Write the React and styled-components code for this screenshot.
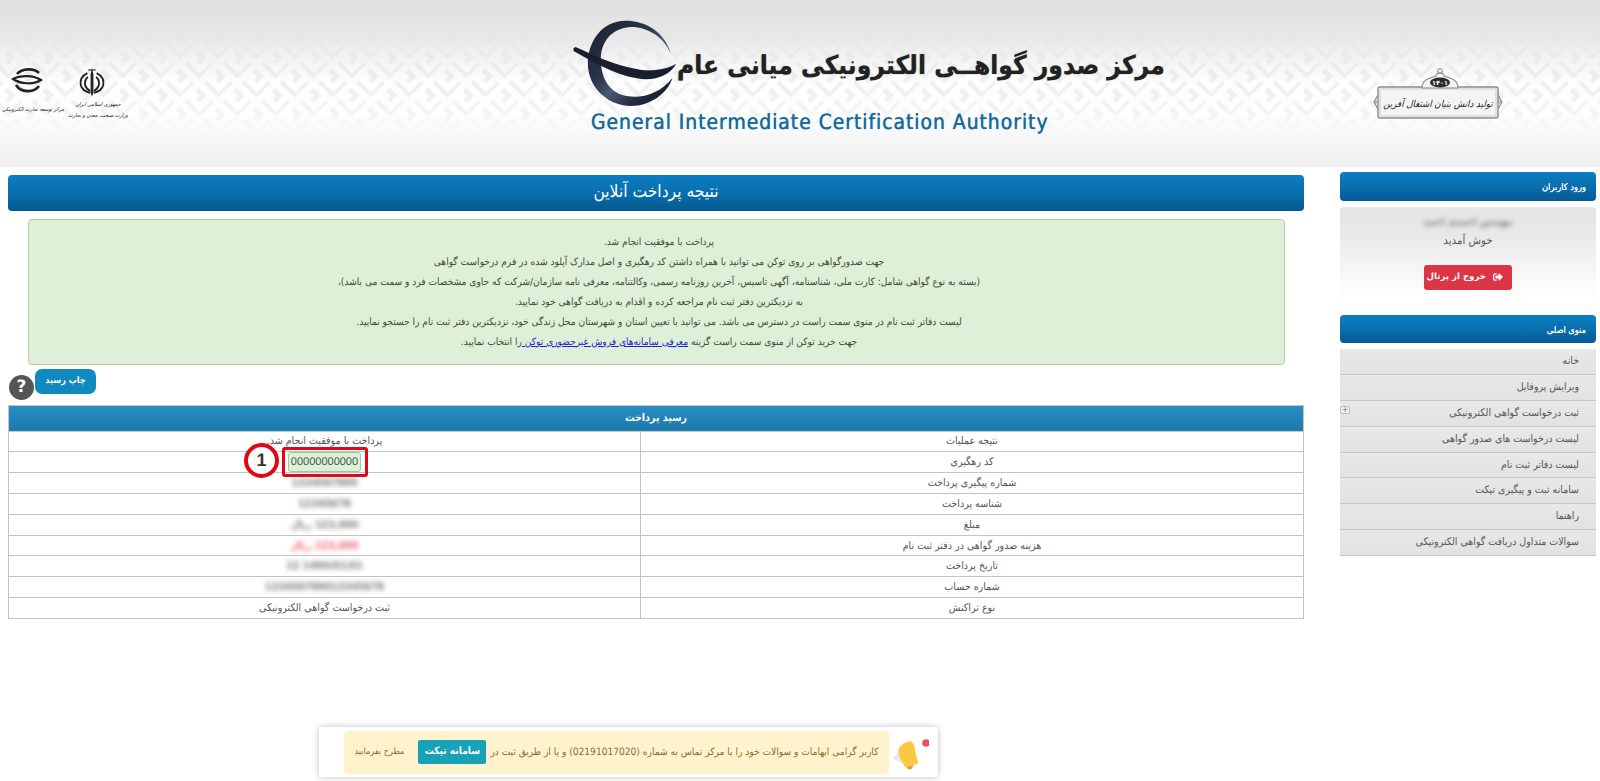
import React from 'react';
import styled, { createGlobalStyle } from 'styled-components';
import { FaSignOutAlt } from 'react-icons/fa';

const FONT = '"DejaVu Sans Condensed", "DejaVu Sans", sans-serif';

const Global = createGlobalStyle`
  html, body { margin: 0; padding: 0; background: #fff; }
  body { font-family: ${FONT}; overflow: hidden; text-rendering: geometricPrecision; }
  * { box-sizing: border-box; }
`;

const Page = styled.div`height: 781px; overflow: hidden;`;

const Banner = styled.header`
  position: relative; height: 167px; display: flex; overflow: hidden; direction: ltr;
  background: linear-gradient(to bottom, #dfdfdf 0, #e9e9e9 45px, #f1f1f1 100px, #f8f8f8 130px, #f2f2f2 160px, #eeeeee 167px);
`;
const PatternLayer = styled.svg`
  position: absolute; inset: 0; width: 100%; height: 100%;
`;
const Ministries = styled.div`
  position: relative; width: 130px; flex: none; padding-top: 68px; display: grid; grid-template-columns: 66px 64px;
`;
const MinistryCol = styled.div`display: flex; flex-direction: column; align-items: center;`;
const TinyText = styled.div`
  direction: rtl; font-size: 5.4px; line-height: 10px; color: #222; white-space: nowrap; font-style: italic;
  margin-top: ${p => p.$top || 0}px;
`;
const LogoSlot = styled.div`margin-right: ${p => p.$shift}px;`;
const Brand = styled.div`
  position: relative; margin-left: 440px; width: 620px; height: 167px; flex: none; display: flex; flex-direction: column;
`;
const BrandTop = styled.div`display: flex; align-items: flex-start; height: 108px; padding-top: 18px;`;
const Title = styled.h1`
  margin: 28px 0 0 0; direction: rtl; font: bold 26.1px/40px ${FONT}; color: #222; white-space: nowrap;
  text-shadow: 0 0 1px #666;
`;
const English = styled.div`
  margin: 0 0 0 21px; font: 21px/28px ${FONT}; color: #17699c; letter-spacing: 0.92px; white-space: nowrap;
  text-shadow: 0 0 .7px #17699c;
`;
const Seal = styled.div`position: relative; margin: 67px 80px 0 auto; flex: none;`;

const Body = styled.div`
  direction: rtl; display: flex; align-items: flex-start; gap: 36px; padding: 5px 4px 0 8px;
`;
const Side = styled.aside`width: 256px; flex: none;`;
const SideHead = styled.div`
  height: 28.5px; border-radius: 4px; padding: 5px 10px 0; color: #fff; font: 9.2px/22px ${FONT};
  text-shadow: 0 0 .6px #fff;
  background: linear-gradient(to bottom, #0b7ec2 0, #0a6dab 55%, #055a96 100%);
`;
const UserBox = styled.div`
  height: 108px; margin-top: 6px; border-radius: 4px; text-align: center; padding-top: 8px;
  background: linear-gradient(to bottom, #e6e6e6 0, #e8e8e8 25%, #f5f5f5 55%, #fff 85%, #fbfbfb 100%);
  font-size: 11.4px; color: #555;
`;
const Blurred = styled.div`
  filter: blur(${p => p.$b || 2}px); color: ${p => p.$c || '#777'}; line-height: ${p => p.$lh || 16}px; font-size: ${p => p.$fs || 11}px; font-weight: bold;
`;
const Welcome = styled.div`line-height: 16px; margin-top: 1px;`;
const Logout = styled.div`
  width: 88px; height: 25px; margin: 17px auto 0; padding-right: 9px; background: #dc3545; color: #fff; border-radius: 3px;
  display: flex; align-items: center; justify-content: flex-start; gap: 7px; font: bold 8.6px/1 "DejaVu Sans", sans-serif; white-space: nowrap;
`;
const LogoutIcon = styled(FaSignOutAlt)`flex: none; width: 10px; height: 10px;`;
const Menu = styled.ul`list-style: none; margin: 6px 0 0; padding: 0;`;
const MenuItem = styled.li`
  position: relative; height: 25.9px; line-height: 24px; padding-right: 17px; font-size: 10.5px; color: #555;
  background: linear-gradient(to bottom, #e8e8e8, #e2e2e2); border-bottom: 1px solid #c6c6c6; white-space: nowrap;
`;
const PlusBox = styled.span`
  position: absolute; left: 0; top: 5px; width: 10px; height: 8px; background: #f5f5f5; border: 1px solid #bbb; border-radius: 2px;
  font: 8px/6px "DejaVu Sans", sans-serif; text-align: center; color: #666;
`;

const Main = styled.main`flex: 1; min-width: 0; padding-top: 3px;`;
const MainHead = styled.div`
  height: 35.5px; border-radius: 4px; text-align: center; color: #fff; font: 17.3px/35px ${FONT};
  background: linear-gradient(to bottom, #0a7ec4 0, #0a6dab 55%, #04588f 100%);
`;
const Notice = styled.div`
  margin: 8px 19px 0 20px; height: 146px; padding: 13px 0 0 5px; background: #dff0d8; border: 1px solid #b5cf9f; border-radius: 4px;
  text-align: center; font-size: 10.1px; line-height: 20px; color: #3d4a35;
  a { color: #2222cc; text-decoration: underline; }
`;
const Tools = styled.div`
  direction: ltr; display: flex; align-items: flex-start; height: 36px; margin-top: 4px; padding-left: 1px;
`;
const Help = styled.div`
  width: 25px; height: 25px; margin-top: 6px; background: #555; border-radius: 50%; color: #fff; text-align: center;
  font: bold 17px/25px "DejaVu Sans", sans-serif;
`;
const PrintBtn = styled.div`
  width: 61px; height: 25px; margin-left: 1px; background: #1089bf; border-radius: 7px; color: #fff; text-align: center; direction: rtl;
  font: bold 9px/24px ${FONT};
`;
const Receipt = styled.table`
  width: 100%; border-collapse: collapse; table-layout: fixed; font-size: 10.6px; color: #555; text-align: center;
  border: 1px solid #c4c4c4;
`;
const ValueCol = styled.col`width: 48.8%;`;
const ReceiptHead = styled.th`
  height: 26px; padding: 0; color: #fff; font: bold 10.6px/24px ${FONT};
  background: linear-gradient(to bottom, #2a8ec4, #1c79ad);
`;
const Cell = styled.td`
  height: 20.8px; padding: 0; border: 1px solid #c4c4c4; line-height: 18px; overflow: visible; white-space: nowrap;
`;
const Marked = styled.span`
  position: relative; display: inline-block; vertical-align: middle; direction: ltr;
`;
const Chip = styled.span`
  display: block; width: 73px; height: 20px; background: #dff0d8; border: 1px solid #a9c48e; border-radius: 3px;
  font: 11px/18px "Liberation Sans", sans-serif; color: #3c6045;
`;
const RedBox = styled.span`
  position: absolute; left: -6px; top: -5px; width: 86px; height: 30px; border: 3.5px solid #e30613; border-radius: 3px;
`;
const RedNum = styled.span`
  position: absolute; left: -44px; top: -9px; width: 35px; height: 35px; border: 4px solid #e30613; border-radius: 50%; background: #fff;
  color: #333; font: bold 18px/27px "Liberation Sans", sans-serif; text-align: center;
`;
const Toast = styled.div`
  position: fixed; left: 319px; bottom: 4px; width: 619px; height: 50px; background: #fff; border-radius: 3px; direction: ltr;
  box-shadow: 0 0 6px rgba(0,0,0,.25); display: flex; align-items: center; padding: 0 0 0 25px; gap: 4px;
`;
const ToastBody = styled.div`
  width: 545px; height: 43px; background: #fff3cd; border-radius: 4px; direction: rtl; display: flex; align-items: center; justify-content: center; gap: 4px;
  font-size: 10.1px; color: #8a6d2b; white-space: nowrap; flex: none;
`;
const TicketBtn = styled.span`
  width: 68px; height: 24px; background: #17a2b8; border-radius: 2px; color: #fff; font-weight: bold; text-align: center; line-height: 23px; flex: none;
`;
const ToastTail = styled.span`font-size: 9px; margin-right: 10px;`;

const rows = [
  ['نتیجه عملیات', 'پرداخت با موفقیت انجام شد.'],
  ['کد رهگیری', 'code'],
  ['شماره پیگیری پرداخت', 'b:1234567890'],
  ['شناسه پرداخت', 'b:12345678'],
  ['مبلغ', 'b:123,000 ریال'],
  ['هزینه صدور گواهی در دفتر ثبت نام', 'r:123,000 ریال'],
  ['تاریخ پرداخت', 'b:1400/01/01 12'],
  ['شماره حساب', 'b:123456789012345678'],
  ['نوع تراکنش', 'ثبت درخواست گواهی الکترونیکی'],
];
const menu = ['خانه', 'ویرایش پروفایل', 'ثبت درخواست گواهی الکترونیکی', 'لیست درخواست های صدور گواهی', 'لیست دفاتر ثبت نام', 'سامانه ثبت و پیگیری تیکت', 'راهنما', 'سوالات متداول دریافت گواهی الکترونیکی'];

const renderValue = v => {
  if (v === 'code') return <Marked><RedNum>1</RedNum><Chip>00000000000</Chip><RedBox /></Marked>;
  if (v.startsWith('b:')) return <Blurred $b={2.5} $lh={18} $fs={10.6}>{v.slice(2)}</Blurred>;
  if (v.startsWith('r:')) return <Blurred $b={2.5} $lh={18} $fs={10.6} $c="#ee5a6c">{v.slice(2)}</Blurred>;
  return v;
};

const Meander = () => (
  <PatternLayer aria-hidden="true">
    <defs>
      <pattern id="mnd" width="27" height="27" patternUnits="userSpaceOnUse" patternTransform="translate(8 40) rotate(45)">
        <path d="M0 3.5 H21 V20 H10 V12 M21 3.5 H27 M3.5 27 V3.5" fill="none" stroke="#fff" strokeWidth="6.5" />
      </pattern>
      <linearGradient id="mndFade" x1="0" y1="0" x2="0" y2="1">
        <stop offset="0.22" stopColor="#fff" stopOpacity="0" />
        <stop offset="0.5" stopColor="#fff" stopOpacity="0.85" />
        <stop offset="0.68" stopColor="#fff" stopOpacity="0.85" />
        <stop offset="0.82" stopColor="#fff" stopOpacity="0" />
      </linearGradient>
      <mask id="mndMask"><rect width="100%" height="100%" fill="url(#mndFade)" /></mask>
    </defs>
    <rect width="100%" height="100%" fill="url(#mnd)" mask="url(#mndMask)" />
  </PatternLayer>
);

const GlobeLogo = () => (
  <svg width={107} height={90} viewBox="30 25 320 270" style={{ display: 'block', flex: 'none' }}>
    <defs>
      <linearGradient id="gring" x1="0" y1="0" x2="1" y2="1">
        <stop offset="0" stopColor="#1a2032" />
        <stop offset=".4" stopColor="#2c3449" />
        <stop offset=".55" stopColor="#4b5874" />
        <stop offset=".75" stopColor="#232a3e" />
        <stop offset="1" stopColor="#141826" />
      </linearGradient>
    </defs>
    <path fill="url(#gring)" d="M332 132 C312 62 252 33 197 33 C122 33 83 100 83 160 C83 240 150 289 212 289 C272 289 322 250 337 205 C300 250 250 266 205 260 C152 253 122 210 122 150 C122 100 150 57 210 52 C260 50 312 82 332 132 Z" />
    <path fill="#1a1f30" d="M40 116 L46 112 C100 136 160 168 240 180 C282 185 322 178 348 162 C332 196 282 216 230 206 C160 194 92 152 40 124 Z" />
  </svg>
);

const SmallGlobe = () => (
  <svg width="32" height="25" viewBox="0 0 32 25" style={{ display: 'block' }}>
    <g fill="none" stroke="#222">
      <path d="M28 5 C23 0 11 0 6 6" strokeWidth="2.6" />
      <path d="M5 17 C10 25 23 25 28 18" strokeWidth="2.6" />
      <path d="M2 11 C9 7 23 7 30 12 C23 17 9 16 2 11 Z" strokeWidth="2.2" />
    </g>
  </svg>
);

const Emblem = () => (
  <svg width="28" height="29" viewBox="0 0 30 30" style={{ display: 'block' }}>
    <g fill="none" stroke="#222" strokeWidth="2">
      <path d="M10 5 C4 8 2 13 3 18 C4 22 8 25 13 26" />
      <path d="M20 5 C26 8 28 13 27 18 C26 22 22 25 17 26" />
      <path d="M10.5 9 C7.5 12 7 16 8 19 C9 21 11 23 13 24" />
      <path d="M19.5 9 C22.5 12 23 16 22 19 C21 21 19 23 17 24" />
    </g>
    <path d="M15 0 L16.5 6 V26 L15 30 L13.5 26 V6 Z" fill="#222" />
    <path d="M11 1 h8 v1.2 h-8z" fill="#222" />
  </svg>
);

const SealArt = () => (
  <svg width="150" height="55" viewBox="0 0 150 55" style={{ display: 'block' }}>
    <path d="M8 28 L4 35 L8 42 M128 28 L132 35 L128 42" fill="none" stroke="#888" strokeWidth="1.2" />
    <circle cx="6.4" cy="35" r="1" fill="none" stroke="#666" strokeWidth=".6" />
    <circle cx="129.6" cy="35" r="1" fill="none" stroke="#666" strokeWidth=".6" />
    <rect x="8" y="20" width="120" height="31" rx="2" fill="#f4f4f4" stroke="#8a8a8a" strokeWidth="1.4" />
    <rect x="10" y="22" width="116" height="27" rx="1" fill="none" stroke="#bbb" strokeWidth=".7" />
    <path d="M52 21 C52 12 60 11 66 9 C66 5 74 5 74 9 C80 11 88 12 88 21 Z" fill="#f4f4f4" stroke="#8a8a8a" strokeWidth="1.1" />
    <circle cx="70" cy="4" r="2.4" fill="none" stroke="#8a8a8a" strokeWidth="1" />
    <ellipse cx="70" cy="15.5" rx="10" ry="5" fill="#2c2c2c" />
    <text x="70" y="18" textAnchor="middle" fontSize="6.5" fontWeight="bold" fill="#fff" fontFamily="DejaVu Sans">۱۴۰۱</text>
    <text x="68" y="40" textAnchor="middle" fontSize="9.6" direction="rtl" fill="#1c1c1c" fontStyle="italic" fontFamily="DejaVu Sans Condensed, DejaVu Sans">تولید دانش بنیان اشتغال آفرین</text>
  </svg>
);

const Bell = () => (
  <svg width="36" height="40" viewBox="0 0 36 40" style={{ flex: 'none' }}>
    <circle cx="33" cy="11" r="3.8" fill="#e8525a" />
    <path d="M0 26.5 L6 18 L9 31.5 Z" fill="#e6eaee" />
    <path d="M18 9 C12 10 6 13 5.5 19 C5.5 25 9 30 12 35 C17 35 22 33 25.5 31 C23 26 23 22 22 17 C21.5 13 20 11 18 9 Z" fill="#fbc93f" />
    <path d="M13.5 34.7 C15 38.5 19 38.5 20.5 33.5 Z" fill="#e8993a" />
  </svg>
);

export default function App() {
  return (
    <Page>
      <Global />
      <Banner>
        <Meander />
        <Ministries>
          <MinistryCol>
            <LogoSlot $shift={12}><SmallGlobe /></LogoSlot>
            <TinyText $top={12}>مرکز توسعه تجارت الکترونیکی</TinyText>
          </MinistryCol>
          <MinistryCol>
            <LogoSlot $shift={12}><Emblem /></LogoSlot>
            <TinyText $top={3}>جمهوری اسلامی ایران</TinyText>
            <TinyText $top={1}>وزارت صنعت، معدن و تجارت</TinyText>
          </MinistryCol>
        </Ministries>
        <Brand>
          <BrandTop>
            <GlobeLogo />
            <Title>مرکز صدور گواهــی الکترونیکی میانی عام</Title>
          </BrandTop>
          <English>General Intermediate Certification Authority</English>
        </Brand>
        <Seal><SealArt /></Seal>
      </Banner>
      <Body>
        <Side>
          <SideHead>ورود کاربران</SideHead>
          <UserBox>
            <Blurred $b={2.4} $fs={10}>مهندس احمدی احمد</Blurred>
            <Welcome>خوش آمدید</Welcome>
            <Logout><LogoutIcon />خروج از پرتال</Logout>
          </UserBox>
          <SideHead>منوی اصلی</SideHead>
          <Menu>
            {menu.map((m, i) => (
              <MenuItem key={m}>{m}{i === 2 && <PlusBox>+</PlusBox>}</MenuItem>
            ))}
          </Menu>
        </Side>
        <Main>
          <MainHead>نتیجه پرداخت آنلاین</MainHead>
          <Notice>
            <div>پرداخت با موفقیت انجام شد.</div>
            <div>جهت صدورگواهی بر روی توکن می توانید با همراه داشتن کد رهگیری و اصل مدارک آپلود شده در فرم درخواست گواهی</div>
            <div>(بسته به نوع گواهی شامل: کارت ملی، شناسنامه، آگهی تاسیس، آخرین روزنامه رسمی، وکالتنامه، معرفی نامه سازمان/شرکت که حاوی مشخصات فرد و سمت می باشد)،</div>
            <div>به نزدیکترین دفتر ثبت نام مراجعه کرده و اقدام به دریافت گواهی خود نمایید.</div>
            <div>لیست دفاتر ثبت نام در منوی سمت راست در دسترس می باشد. می توانید با تعیین استان و شهرستان محل زندگی خود، نزدیکترین دفتر ثبت نام را جستجو نمایید.</div>
            <div>جهت خرید توکن از منوی سمت راست گزینه <a href="#">معرفی سامانه‌های فروش غیرحضوری توکن </a>را انتخاب نمایید.</div>
          </Notice>
          <Tools>
            <Help>?</Help>
            <PrintBtn>چاپ رسید</PrintBtn>
          </Tools>
          <Receipt>
            <colgroup><col /><ValueCol /></colgroup>
            <thead><tr><ReceiptHead colSpan={2}>رسید پرداخت</ReceiptHead></tr></thead>
            <tbody>
              {rows.map(([k, v]) => (
                <tr key={k}><Cell>{k}</Cell><Cell>{renderValue(v)}</Cell></tr>
              ))}
            </tbody>
          </Receipt>
        </Main>
      </Body>
      <Toast>
        <ToastBody>
          <span>کاربر گرامی ابهامات و سوالات خود را با مرکز تماس به شماره (02191017020) و یا از طریق ثبت در</span>
          <TicketBtn>سامانه تیکت</TicketBtn>
          <ToastTail>مطرح بفرمایید</ToastTail>
        </ToastBody>
        <Bell />
      </Toast>
    </Page>
  );
}
